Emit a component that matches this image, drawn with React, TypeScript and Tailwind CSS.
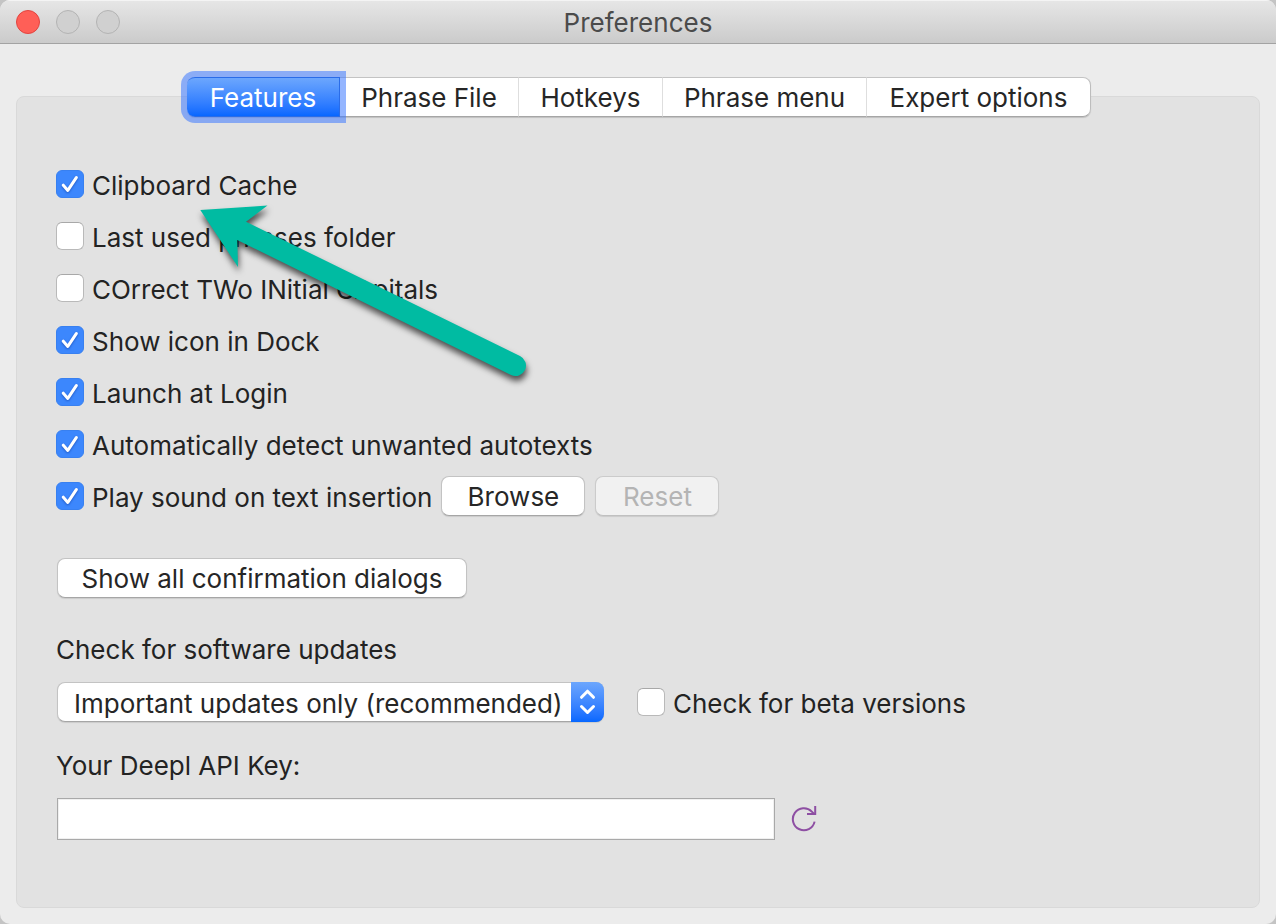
import { useState } from "react";
import type { ReactNode } from "react";

const TABS = [
  { name: "Features", width: "w-[153px]" },
  { name: "Phrase File", width: "w-[179px]" },
  { name: "Hotkeys", width: "w-[144px]" },
  { name: "Phrase menu", width: "w-[204px]" },
  { name: "Expert options", width: "w-[224px]" },
];

const OPTIONS = [
  { id: "clipboard-cache", label: "Clipboard Cache", on: true },
  { id: "last-folder", label: "Last used phrases folder", on: false },
  { id: "two-initials", label: "COrrect TWo INitial CApitals", on: false },
  { id: "dock-icon", label: "Show icon in Dock", on: true },
  { id: "launch-login", label: "Launch at Login", on: true },
  { id: "detect-unwanted", label: "Automatically detect unwanted autotexts", on: true },
  { id: "play-sound", label: "Play sound on text insertion", on: true },
];

function Checkbox({ id, label, on }: { id: string; label: string; on: boolean }) {
  return (
    <div className="flex items-center gap-2">
      <span className="grid size-7 shrink-0">
        <input
          id={id}
          type="checkbox"
          defaultChecked={on}
          className="peer col-start-1 row-start-1 size-7 appearance-none rounded-md border border-[#b9b9b9] border-t-[#a8a8a8] bg-white checked:border-[#3880f0] checked:bg-[#3c87fd]"
        />
        <svg
          viewBox="0 0 28 28"
          className="pointer-events-none invisible col-start-1 row-start-1 size-7 drop-shadow-[0_1px_1px_rgba(0,40,140,0.5)] peer-checked:visible"
          fill="none"
          stroke="white"
          strokeWidth="3"
          strokeLinecap="round"
          strokeLinejoin="round"
        >
          <path d="M7.3 15.2 11.8 20.4 20.3 7.6" />
        </svg>
      </span>
      <label htmlFor={id} className="pt-1 leading-8 whitespace-nowrap">
        {label}
      </label>
    </div>
  );
}

function PushButton({ children, className, disabled }: { children: ReactNode; className: string; disabled?: boolean }) {
  return (
    <button
      type="button"
      disabled={disabled}
      className={`h-10 rounded-lg border border-[#c3c3c3] border-b-[#a6a6a6] bg-white pt-0.5 leading-8 whitespace-nowrap text-[#262626] shadow-[0_1px_1px_rgba(0,0,0,0.1)] disabled:border-[#cbcbcb] disabled:border-b-[#c0c0c0] disabled:bg-[#f1f1f1] disabled:text-[#b4b4b4] ${className}`}
    >
      {children}
    </button>
  );
}

export default function App() {
  const [active, setActive] = useState("Features");

  return (
    <div className="min-h-screen bg-[#c4c4c4] font-['Inter','Liberation_Sans',sans-serif] text-[26px] text-[#232323]">
      <div className="relative flex min-h-screen flex-col overflow-hidden rounded-[10px] bg-[#ececec]">
        <header className="grid h-11 grid-cols-[1fr_auto_1fr] items-center border-t border-b border-t-[#f4f4f4] border-b-[#a3a3a3] bg-linear-to-b from-[#e6e6e6] to-[#cbcbcb] px-4">
          <div className="flex gap-4">
            <button type="button" aria-label="Close" className="size-6 rounded-full border border-[#e2443f] bg-[#ff5f57]" />
            <button type="button" aria-label="Minimize" className="size-6 rounded-full border border-[#b3b3b3] bg-[#d0d0d0]" />
            <button type="button" aria-label="Zoom" className="size-6 rounded-full border border-[#b3b3b3] bg-[#d0d0d0]" />
          </div>
          <h1 className="pt-0.5 leading-8 text-[#4b4b4b]">Preferences</h1>
        </header>

        <main className="flex flex-1 flex-col px-4 pt-[33px] pb-4">
          <div role="tablist" className="z-10 -mb-[21px] ml-0.5 flex h-10 self-center rounded-lg shadow-[0_1px_1px_rgba(0,0,0,0.15)]">
            {TABS.map((tab) => (
              <button
                key={tab.name}
                type="button"
                role="tab"
                aria-selected={active === tab.name}
                onClick={() => setActive(tab.name)}
                className={`${tab.width} h-10 border-y border-r border-t-[#c3c3c3] border-r-[#dedede] border-b-[#a6a6a6] bg-white pt-0.5 leading-8 whitespace-nowrap text-[#262626] first:rounded-l-lg last:rounded-r-lg last:border-r-[#bdbdbd] aria-selected:z-10 aria-selected:border-[#2a6ce8] aria-selected:bg-linear-to-b aria-selected:from-[#6ca6fd] aria-selected:to-[#0567ff] aria-selected:text-white aria-selected:ring-6 aria-selected:ring-[#3c78ff]/55`}
              >
                {tab.name}
              </button>
            ))}
          </div>

          <section className="flex flex-1 flex-col rounded-lg border border-[#d9d9d9] bg-[#e2e2e2] px-[39px] pt-[61px] pb-10">
            {OPTIONS.map((option) => (
              <div key={option.id} className="flex h-13 items-center">
                <Checkbox {...option} />
                {option.id === "play-sound" && (
                  <div className="ml-[9px] flex gap-2.5">
                    <PushButton className="w-36">Browse</PushButton>
                    <PushButton className="w-31" disabled>
                      Reset
                    </PushButton>
                  </div>
                )}
              </div>
            ))}

            <PushButton className="mt-9 ml-px w-[410px] self-start">Show all confirmation dialogs</PushButton>

            <label htmlFor="updates" className="mt-9 self-start leading-8">
              Check for software updates
            </label>
            <div className="mt-4 ml-px flex items-center gap-[33px]">
              <div className="grid w-[547px]">
                <select
                  id="updates"
                  className="col-start-1 row-start-1 h-10 appearance-none rounded-lg border border-[#c3c3c3] border-b-[#a6a6a6] bg-white pt-1 pr-9 pl-4 leading-8 text-[#262626] shadow-[0_1px_1px_rgba(0,0,0,0.1)]"
                >
                  <option>Important updates only (recommended)</option>
                </select>
                <span className="pointer-events-none col-start-1 row-start-1 grid h-10 w-[33px] place-items-center justify-self-end rounded-r-lg bg-linear-to-b from-[#6ca6fd] to-[#0567ff]">
                  <svg
                    viewBox="0 0 33 40"
                    className="h-10 w-[33px]"
                    fill="none"
                    stroke="white"
                    strokeWidth="3"
                    strokeLinecap="round"
                    strokeLinejoin="round"
                  >
                    <path d="M10.5 15.3 16.5 9.2 22.5 15.3M10.5 24.5 16.5 30.5 22.5 24.5" />
                  </svg>
                </span>
              </div>
              <Checkbox id="beta" label="Check for beta versions" on={false} />
            </div>

            <label htmlFor="api-key" className="mt-7 self-start leading-8">
              Your Deepl API Key:
            </label>
            <div className="mt-4 flex items-center gap-4">
              <input
                id="api-key"
                type="text"
                className="ml-px h-[42px] w-[718px] border border-[#a9a9a9] bg-white px-2 shadow-[inset_0_0_0_1px_#f0f0f0] outline-none"
              />
              <button type="button" aria-label="Refresh">
                <svg viewBox="0 0 28 28" className="size-7" fill="none" stroke="#8e4fa3" strokeWidth="2">
                  <path d="M23.6 16.6A11 11 0 1 1 20.8 6.6L23.2 9" />
                  <path d="M24.2 1V9H16" />
                </svg>
              </button>
            </div>
          </section>
        </main>

        <svg
          viewBox="0 0 360 200"
          className="pointer-events-none absolute top-[190px] left-[180px] z-20 h-[200px] w-[360px] drop-shadow-[1px_5px_3px_rgba(0,0,0,0.65)]"
          aria-hidden="true"
        >
          <path
            d="M20.3 20 87.5 15.5 66 31.7 340 166A10.3 10.3 0 0 1 331 185L57.3 50 58 77Z"
            fill="#00bba2"
          />
        </svg>
      </div>
    </div>
  );
}
